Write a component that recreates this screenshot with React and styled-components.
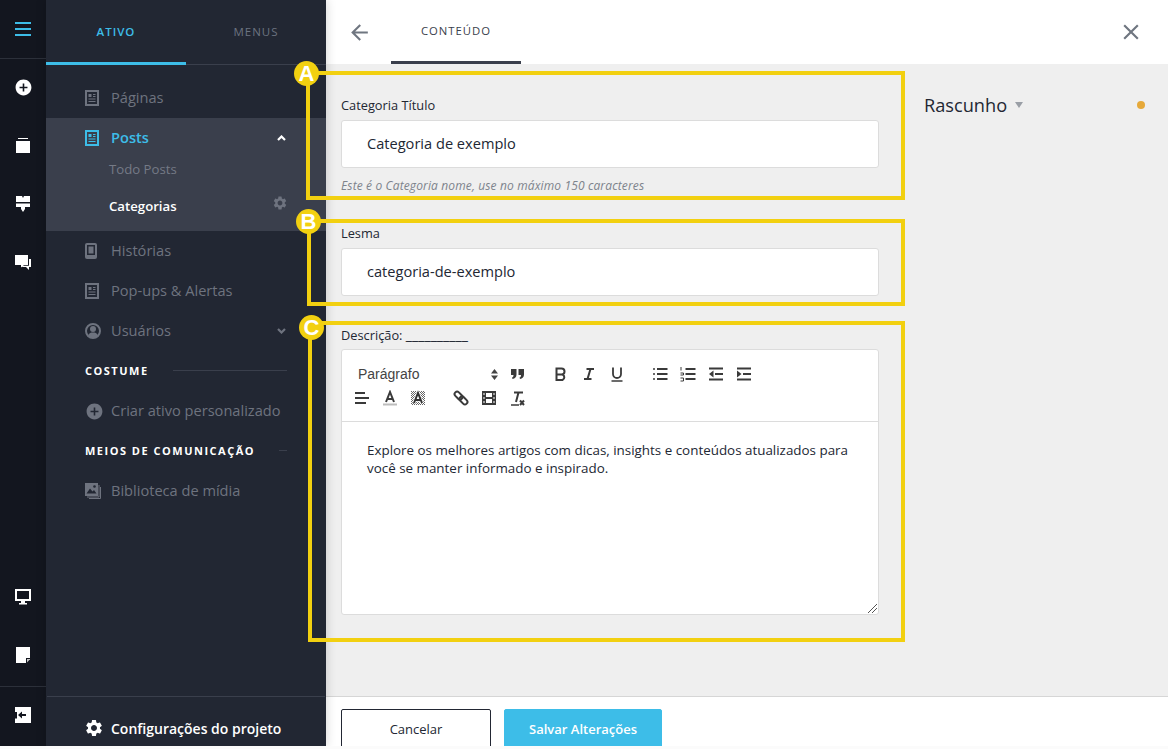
import React from 'react'
import styled, { createGlobalStyle } from 'styled-components'
import { MdAddCircle, MdSettings, MdArrowBack, MdClose } from 'react-icons/md'

const GlobalStyle = createGlobalStyle`
  html, body {
    margin: 0;
    padding: 0;
    height: 100%;
    overflow: hidden;
    background: #fbfbfb;
  }
  * {
    box-sizing: border-box;
  }
`

const font = `"Open Sans", "Noto Sans", sans-serif`

// --- little drawings ---

const PageIcon = () => (
  <svg width="14" height="16" viewBox="0 0 14 16">
    <rect x="1" y="1" width="12" height="14" fill="none" stroke="currentColor" strokeWidth="2" />
    <rect x="3.5" y="4" width="3" height="3" fill="currentColor" />
    <path d="M8 4.5h2.5M8 6.5h2.5M3.5 9h7M3.5 11.5h7" stroke="currentColor" strokeWidth="1.2" />
  </svg>
)

const PhoneIcon = () => (
  <svg width="12" height="16" viewBox="0 0 12 16">
    <rect x="0" y="0" width="12" height="16" rx="2" fill="currentColor" />
    <rect x="2" y="2" width="8" height="10" fill="#222733" />
    <rect x="3.5" y="3.5" width="5" height="7" fill="currentColor" />
  </svg>
)

const UserIcon = () => (
  <svg width="16" height="16" viewBox="0 0 16 16">
    <circle cx="8" cy="8" r="7" fill="none" stroke="currentColor" strokeWidth="2" />
    <circle cx="8" cy="6" r="3" fill="currentColor" />
    <path d="M3 12.5c1-2.5 3-3 5-3s4 .5 5 3l-2.5 2h-5z" fill="currentColor" />
  </svg>
)

const LibraryIcon = () => (
  <svg width="16" height="16" viewBox="0 0 16 16">
    <rect x="0" y="0" width="13" height="13" fill="currentColor" />
    <path d="M1.5 10.5 5 5.5l2.5 3 1.5-1.5 2.5 3.5z" fill="#222733" />
    <circle cx="9.5" cy="3.5" r="1.3" fill="#222733" />
    <path d="M14 2v12H2M15.5 4v11.5H4" fill="none" stroke="currentColor" strokeWidth="1" />
  </svg>
)

const Chevron = ({ up }) => (
  <svg width="9" height="6" viewBox="0 0 9 6">
    <path d={up ? 'M1 5l3.5-3.5L8 5' : 'M1 1l3.5 3.5L8 1'} fill="none" stroke="currentColor" strokeWidth="2.2" />
  </svg>
)

const CardsIcon = () => (
  <svg width="14" height="15" viewBox="0 0 14 15">
    <rect x="2" y="0" width="10" height="1" fill="currentColor" />
    <rect x="0" y="3" width="14" height="12" fill="currentColor" />
  </svg>
)

const BrushIcon = () => (
  <svg width="14" height="16" viewBox="0 0 14 16">
    <path d="M0 0h6l1 2 1-2h6v6H0zM0 7.5h14V11H9v2l-2 3-2-3v-2H0z" fill="currentColor" />
  </svg>
)

const ChatIcon = () => (
  <svg width="16" height="15" viewBox="0 0 16 15">
    <path d="M0 0h13v10H9l-3 2.5V10H0z" fill="currentColor" />
    <path d="M14 4h2v8h-2v3l-3-3H6.5L8 10.7h6z" fill="currentColor" />
  </svg>
)

const MonitorIcon = () => (
  <svg width="16" height="16" viewBox="0 0 16 16">
    <path d="M0 0h16v12H10v2h2v1.5H4V14h2v-2H0z M2 2v8h12V2z" fill="currentColor" fillRule="evenodd" />
  </svg>
)

const NoteIcon = () => (
  <svg width="14" height="16" viewBox="0 0 14 16">
    <path d="M0 0h14v11H10v5H0z" fill="currentColor" />
    <path d="M11 15.5V12h3.2z" fill="#c9c9c9" />
  </svg>
)

const ExitIcon = () => (
  <svg width="16" height="16" viewBox="0 0 16 16">
    <path d="M0 0h16v16H0v-4.5h2V5H0z" fill="currentColor" />
    <path d="M11 7H7V4.5L3 8l4 3.5V9h4z" fill="#13161f" />
  </svg>
)

const Tool = ({ children }) => (
  <svg width="16" height="16" viewBox="0 0 16 16">{children}</svg>
)

const QuoteIcon = () => (
  <Tool>
    <path d="M1 3h5.5v5.5c0 2.5-1.500 4-4 4.500L2 11.500c1-.3 1.500-1 1.500-2.500H1zM8.500 3H14v5.500c0 2.500-1.500 4-4 4.500l-.5-1.500c1-.3 1.500-1 1.500-2.500H8.500z" fill="currentColor" />
  </Tool>
)

const BoldIcon = () => (
  <Tool>
    <path d="M3.500 2.500h5a3 3 0 0 1 0 6h-5zM3.500 8.500h6a3 3 0 0 1 0 5.500h-6z" fill="none" stroke="currentColor" strokeWidth="2" />
  </Tool>
)

const ItalicIcon = () => (
  <Tool>
    <path d="M5.500 3H13M3 13h7.500M9.500 3l-3 10" fill="none" stroke="currentColor" strokeWidth="2" />
  </Tool>
)

const UnderlineIcon = () => (
  <Tool>
    <path d="M4 1.500v6.500a4 4 0 0 0 8 0V1.500" fill="none" stroke="currentColor" strokeWidth="1.800" />
    <path d="M2.500 15h11" stroke="currentColor" strokeWidth="1.500" />
  </Tool>
)

const BulletIcon = () => (
  <Tool>
    <path d="M5 3h10.500M5 8h10.500M5 13h10.500" stroke="currentColor" strokeWidth="2" />
    <path d="M1 3h2M1 8h2M1 13h2" stroke="currentColor" strokeWidth="1.500" />
  </Tool>
)

const NumberIcon = () => (
  <Tool>
    <path d="M5.500 3h10M5.500 8h10M5.500 13h10" stroke="currentColor" strokeWidth="2" />
    <path d="M1 1v3.500M.5 7h3v2h-3M.5 12h3v3h-3" fill="none" stroke="currentColor" strokeWidth="1" />
  </Tool>
)

const OutdentIcon = () => (
  <Tool>
    <path d="M1 2.500h14M7 8h8M1 13.500h14" stroke="currentColor" strokeWidth="2" />
    <path d="M5.500 4.500v7L1 8z" fill="currentColor" />
  </Tool>
)

const IndentIcon = () => (
  <Tool>
    <path d="M1 2.500h14M7 8h8M1 13.500h14" stroke="currentColor" strokeWidth="2" />
    <path d="M1 4.500v7L5.500 8z" fill="currentColor" />
  </Tool>
)

const AlignIcon = () => (
  <Tool>
    <path d="M1 3h10M1 8h14M1 13h11" stroke="currentColor" strokeWidth="2" />
  </Tool>
)

const FontColorIcon = () => (
  <Tool>
    <path d="M4 12 8 2l4 10M5.500 9h5" fill="none" stroke="currentColor" strokeWidth="2" />
    <rect x="1" y="13.500" width="14" height="2" fill="#bdbdbd" />
  </Tool>
)

const BgColorIcon = () => (
  <Tool>
    <defs>
      <pattern id="dither" width="2" height="2" patternUnits="userSpaceOnUse">
        <rect width="1" height="1" fill="#666" />
        <rect x="1" y="1" width="1" height="1" fill="#666" />
      </pattern>
    </defs>
    <rect x="1" y="1" width="14" height="14" fill="url(#dither)" />
    <path d="M4 13 8 3l4 10M5.500 10h5" fill="none" stroke="#fff" strokeWidth="3.500" />
    <path d="M4 13 8 3l4 10M5.500 10h5" fill="none" stroke="#333" strokeWidth="2" />
  </Tool>
)

const LinkIcon = () => (
  <Tool>
    <g transform="rotate(45 8 8)" fill="none" stroke="currentColor" strokeWidth="2">
      <rect x="0" y="5.500" width="9" height="5" rx="2.500" />
      <rect x="7" y="5.500" width="9" height="5" rx="2.500" />
    </g>
  </Tool>
)

const FilmIcon = () => (
  <Tool>
    <path
      d="M1 1h14v14H1zM5 3v4h6V3zM5 9v4h6V9zM2.500 3v2h1V3zM2.500 7v2h1V7zM2.500 11v2h1v-2zM12.500 3v2h1V3zM12.500 7v2h1V7zM12.500 11v2h1v-2z"
      fill="currentColor"
      fillRule="evenodd"
    />
  </Tool>
)

const ClearIcon = () => (
  <Tool>
    <path d="M5 2.500h9M9.500 2.500 7 12" fill="none" stroke="currentColor" strokeWidth="2" />
    <path d="M2 15h8" stroke="currentColor" strokeWidth="1.500" />
    <path d="M11 10.500l4 4.500M15 10.500l-4 4.500" stroke="currentColor" strokeWidth="2" />
  </Tool>
)

const UpDownIcon = () => (
  <svg width="7" height="11" viewBox="0 0 7 11">
    <path d="M0 4.500 3.500 0 7 4.500zM0 6.500 3.500 11 7 6.500z" fill="#444" />
  </svg>
)

const ResizeGrip = () => (
  <svg width="9" height="9" viewBox="0 0 9 9">
    <path d="M0 9 9 0M4 9l5-5" stroke="#555" strokeWidth="1" />
  </svg>
)

// --- left rail ---

const Page = styled.div`
  position: relative;
  display: flex;
  width: 1168px;
  height: 746px;
  overflow: hidden;
  font-family: ${font};
`

const Rail = styled.div`
  display: flex;
  flex-direction: column;
  width: 46px;
  flex: none;
  background: #13161f;
  color: #fff;
`

const RailRow = styled.div`
  display: flex;
  align-items: center;
  justify-content: center;
  height: ${p => p.$h || 58.5}px;
  flex: none;
  padding-bottom: ${p => p.$lift || 0}px;
  border-bottom: ${p => (p.$under ? '1px solid #2c303a' : 'none')};
  border-top: ${p => (p.$over ? '1px solid #2c303a' : 'none')};
`

const Burger = styled.div`
  position: relative;
  width: 16px;
  height: 14px;
  border-top: 2px solid #3dbde8;
  border-bottom: 2px solid #3dbde8;

  &::after {
    content: '';
    position: absolute;
    left: 0;
    right: 0;
    top: 4px;
    height: 2px;
    background: #3dbde8;
  }
`

const RailSpacer = styled.div`
  flex: 1;
`

// --- sidebar ---

const Sidebar = styled.div`
  position: relative;
  z-index: 1;
  display: flex;
  flex-direction: column;
  width: 280px;
  flex: none;
  background: #222733;
  box-shadow: 0 0 10px rgba(0, 0, 0, 0.18);
`

const Tabs = styled.div`
  display: flex;
  height: 65px;
  flex: none;
  border-bottom: 1px solid #3a3f4c;
`

const Tab = styled.div`
  display: flex;
  align-items: center;
  justify-content: center;
  width: 140px;
  height: 65px;
  padding-bottom: ${p => (p.$active ? 0 : 2)}px;
  font-size: 11.5px;
  letter-spacing: 1px;
  color: ${p => (p.$active ? '#3dbde8' : '#6c7380')};
  font-weight: ${p => (p.$active ? 600 : 400)};
  border-bottom: ${p => (p.$active ? '3px solid #3dbde8' : 'none')};
`

const Nav = styled.div`
  flex: 1;
  padding-top: 13px;
`

const NavRow = styled.div`
  display: flex;
  align-items: center;
  height: ${p => (p.$compact ? 24 : 40)}px;
  padding: 0 39px;
  font-size: 14.6px;
  color: ${p => (p.$active ? '#3dbde8' : '#6e737f')};
`

const NavIcon = styled.span`
  display: flex;
  align-items: center;
  width: 26px;
  flex: none;
`

const NavLabel = styled.span`
  flex: 1;
  padding-bottom: 2px;
  font-weight: ${p => (p.$active ? 600 : 400)};
`

const NavChevron = styled.span`
  display: flex;
  color: ${p => (p.$open ? '#fff' : '#6e737f')};
  margin-right: 1px;
`

const Group = styled.div`
  background: #3a3f4c;
  padding: 8px 0 7px;
`

const SubRow = styled.div`
  display: flex;
  align-items: center;
  justify-content: space-between;
  height: 37px;
  padding: 0 39px 0 63px;
  font-size: 13.2px;
  font-weight: ${p => (p.$current ? 600 : 400)};
  color: ${p => (p.$current ? '#fff' : '#757a86')};
`

const SubGear = styled(MdSettings)`
  margin: 0 -1px 5px 0;
  font-size: 16px;
  color: #6e737f;
`

const SectionRow = styled.div`
  display: flex;
  align-items: center;
  gap: 24px;
  height: 40px;
  padding: 0 39px 2px;
  font-size: 11px;
  font-weight: 700;
  letter-spacing: 1.5px;
  color: #fff;
  white-space: nowrap;

  &::after {
    content: '';
    flex: 1;
    height: 1px;
    background: #3a3f4c;
  }
`

const SidebarFooter = styled.div`
  display: flex;
  align-items: center;
  gap: 7px;
  height: 50px;
  flex: none;
  margin: 0 1px;
  padding: 13px 38px 0;
  border-top: 1px solid #3a3f4c;
  color: #fff;
  font-size: 14px;
  font-weight: 600;
`

const FooterGear = styled(MdSettings)`
  margin-left: -1px;
  font-size: 20px;
`

// --- main ---

const Main = styled.div`
  display: flex;
  flex-direction: column;
  flex: 1;
  min-width: 0;
  background: #efefef;
`

const Header = styled.div`
  display: flex;
  align-items: center;
  height: 64px;
  flex: none;
  padding: 0 24px 0 21px;
  background: #fff;
  color: #6f7680;
`

const BackIcon = styled(MdArrowBack)`
  font-size: 25px;
  margin-right: 19px;
`

const ContentTab = styled.div`
  display: flex;
  align-items: center;
  justify-content: center;
  width: 130px;
  height: 64px;
  font-size: 11.3px;
  letter-spacing: 1px;
  color: #3a3f4c;
  border-bottom: 3px solid #3a3f4c;
`

const CloseButton = styled(MdClose)`
  margin-left: auto;
  font-size: 26px;
`

const Content = styled.div`
  display: flex;
  flex: 1;
  min-height: 0;
  padding: 31px 0 0 15px;
  gap: 45px;
`

const FormColumn = styled.div`
  width: 538px;
  flex: none;
`

const Label = styled.div`
  height: 20px;
  line-height: 20px;
  font-size: 12.8px;
  white-space: nowrap;
  color: #222733;
`

const Blank = styled.span`
  font-size: 14.2px;
`

const Field = styled.div`
  margin-bottom: 29px;
`

const Input = styled.div`
  display: flex;
  align-items: center;
  height: 48px;
  margin-top: 5px;
  padding: 0 0 2px 25px;
  background: #fff;
  border: 1px solid #dcdcdc;
  border-radius: 3px;
  font-size: 14.6px;
  color: #222733;
`

const Hint = styled.div`
  height: 16px;
  margin-top: 10px;
  line-height: 16px;
  font-size: 12px;
  letter-spacing: 0.13px;
  font-style: italic;
  color: #7d838c;
`

const Editor = styled.div`
  position: relative;
  height: 266px;
  margin-top: 4px;
  background: #fff;
  border: 1px solid #dcdcdc;
  border-radius: 3px;
`

const Toolbar = styled.div`
  height: 72px;
  padding: 12px 6px 0;
  border-bottom: 1px solid #dcdcdc;
`

const ToolRow = styled.div`
  display: flex;
  align-items: center;
  height: 24px;
`

const Select = styled.div`
  display: flex;
  align-items: center;
  justify-content: space-between;
  width: 156px;
  padding: 0 6px 0 10px;
  font-family: "Liberation Sans", Arial, sans-serif;
  font-size: 14px;
  color: #444;
`

const ToolButton = styled.span`
  display: flex;
  align-items: center;
  justify-content: center;
  width: 28px;
  height: 24px;
  margin-left: ${p => (p.$gap ? 15 : 0)}px;
  color: #3a3a3a;
`

const EditorBody = styled.div`
  padding: 19px 25px;
  font-size: 13.4px;
  line-height: 18px;
  color: #222733;
`

const Grip = styled.span`
  position: absolute;
  right: 1px;
  bottom: 1px;
  display: flex;
`

const StatusColumn = styled.div`
  display: flex;
  align-items: center;
  flex: 1;
  height: 20px;
  padding-right: 23px;
  font-size: 18.2px;
  color: #222733;
`

const Caret = styled.span`
  width: 0;
  height: 0;
  margin-left: 8px;
  border-left: 4px solid transparent;
  border-right: 4px solid transparent;
  border-top: 6px solid #9a9fa6;
`

const Dot = styled.span`
  width: 8px;
  height: 8px;
  margin-left: auto;
  border-radius: 50%;
  background: #e6a93a;
`

const Footer = styled.div`
  display: flex;
  gap: 13px;
  height: 50px;
  flex: none;
  padding: 12px 0 0 15px;
  overflow: hidden;
  background: #fff;
  border-top: 1px solid #d6d6d6;
`

const Button = styled.div`
  display: flex;
  align-items: center;
  justify-content: center;
  width: ${p => p.$w}px;
  height: 40px;
  border-radius: 2px;
  font-size: 13px;
  font-weight: ${p => (p.$primary ? 600 : 400)};
  color: ${p => (p.$primary ? '#fff' : '#222733')};
  background: ${p => (p.$primary ? '#3dbde8' : '#fff')};
  border: 1px solid ${p => (p.$primary ? '#3dbde8' : '#222733')};
`

// --- yellow callouts over the page ---

const CalloutBox = styled.div`
  position: absolute;
  z-index: 2;
  left: ${p => p.$x}px;
  top: ${p => p.$y}px;
  width: ${p => p.$w}px;
  height: ${p => p.$h}px;
  border: 4px solid #f2d010;
`

const CalloutBadge = styled.div`
  position: absolute;
  z-index: 3;
  left: ${p => p.$x}px;
  top: ${p => p.$y}px;
  display: flex;
  align-items: center;
  justify-content: center;
  width: 25px;
  height: 25px;
  border-radius: 50%;
  background: #f2d010;
  color: #fff;
  font-family: "Liberation Sans", Arial, sans-serif;
  font-size: 22px;
  font-weight: 700;
`

const callouts = [
  { letter: 'A', x: 306, y: 71, w: 599, h: 129, bx: 294, by: 61 },
  { letter: 'B', x: 307, y: 219, w: 598, h: 87, bx: 296, by: 209 },
  { letter: 'C', x: 308, y: 321, w: 597, h: 321, bx: 299, by: 315 },
]

export default function App() {
  return (
    <>
      <GlobalStyle />
      <Page>
        <Rail>
          <RailRow $h={59} $under><Burger /></RailRow>
          <RailRow $h={57}><MdAddCircle size={19} /></RailRow>
          <RailRow><CardsIcon /></RailRow>
          <RailRow><BrushIcon /></RailRow>
          <RailRow><ChatIcon /></RailRow>
          <RailSpacer />
          <RailRow><MonitorIcon /></RailRow>
          <RailRow $h={60} $lift={2}><NoteIcon /></RailRow>
          <RailRow $h={60} $over $lift={3}><ExitIcon /></RailRow>
        </Rail>

        <Sidebar>
          <Tabs>
            <Tab $active>ATIVO</Tab>
            <Tab>MENUS</Tab>
          </Tabs>
          <Nav>
            <NavRow><NavIcon><PageIcon /></NavIcon><NavLabel>Páginas</NavLabel></NavRow>
            <Group>
              <NavRow $active $compact>
                <NavIcon><PageIcon /></NavIcon>
                <NavLabel $active>Posts</NavLabel>
                <NavChevron $open><Chevron up /></NavChevron>
              </NavRow>
              <SubRow>Todo Posts</SubRow>
              <SubRow $current>
                Categorias
                <SubGear />
              </SubRow>
            </Group>
            <NavRow><NavIcon><PhoneIcon /></NavIcon><NavLabel>Histórias</NavLabel></NavRow>
            <NavRow><NavIcon><PageIcon /></NavIcon><NavLabel>Pop-ups &amp; Alertas</NavLabel></NavRow>
            <NavRow>
              <NavIcon><UserIcon /></NavIcon>
              <NavLabel>Usuários</NavLabel>
              <NavChevron><Chevron /></NavChevron>
            </NavRow>
            <SectionRow>COSTUME</SectionRow>
            <NavRow><NavIcon><MdAddCircle size={19} /></NavIcon><NavLabel>Criar ativo personalizado</NavLabel></NavRow>
            <SectionRow>MEIOS DE COMUNICAÇÃO</SectionRow>
            <NavRow><NavIcon><LibraryIcon /></NavIcon><NavLabel>Biblioteca de mídia</NavLabel></NavRow>
          </Nav>
          <SidebarFooter>
            <FooterGear />
            Configurações do projeto
          </SidebarFooter>
        </Sidebar>

        <Main>
          <Header>
            <BackIcon />
            <ContentTab>CONTEÚDO</ContentTab>
            <CloseButton />
          </Header>
          <Content>
            <FormColumn>
              <Field>
                <Label>Categoria Título</Label>
                <Input>Categoria de exemplo</Input>
                <Hint>Este é o Categoria nome, use no máximo 150 caracteres</Hint>
              </Field>
              <Field>
                <Label>Lesma</Label>
                <Input>categoria-de-exemplo</Input>
              </Field>
              <Label>Descrição: <Blank>__________</Blank></Label>
              <Editor>
                <Toolbar>
                  <ToolRow>
                    <Select>Parágrafo <UpDownIcon /></Select>
                    <ToolButton><QuoteIcon /></ToolButton>
                    <ToolButton $gap><BoldIcon /></ToolButton>
                    <ToolButton><ItalicIcon /></ToolButton>
                    <ToolButton><UnderlineIcon /></ToolButton>
                    <ToolButton $gap><BulletIcon /></ToolButton>
                    <ToolButton><NumberIcon /></ToolButton>
                    <ToolButton><OutdentIcon /></ToolButton>
                    <ToolButton><IndentIcon /></ToolButton>
                  </ToolRow>
                  <ToolRow>
                    <ToolButton><AlignIcon /></ToolButton>
                    <ToolButton><FontColorIcon /></ToolButton>
                    <ToolButton><BgColorIcon /></ToolButton>
                    <ToolButton $gap><LinkIcon /></ToolButton>
                    <ToolButton><FilmIcon /></ToolButton>
                    <ToolButton><ClearIcon /></ToolButton>
                  </ToolRow>
                </Toolbar>
                <EditorBody>
                  Explore os melhores artigos com dicas, insights e conteúdos atualizados para você se manter informado e inspirado.
                </EditorBody>
                <Grip><ResizeGrip /></Grip>
              </Editor>
            </FormColumn>
            <StatusColumn>
              Rascunho
              <Caret />
              <Dot />
            </StatusColumn>
          </Content>
          <Footer>
            <Button $w={150}>Cancelar</Button>
            <Button $w={158} $primary>Salvar Alterações</Button>
          </Footer>
        </Main>

        {callouts.map(c => (
          <React.Fragment key={c.letter}>
            <CalloutBox $x={c.x} $y={c.y} $w={c.w} $h={c.h} />
            <CalloutBadge $x={c.bx} $y={c.by}>{c.letter}</CalloutBadge>
          </React.Fragment>
        ))}
      </Page>
    </>
  )
}
